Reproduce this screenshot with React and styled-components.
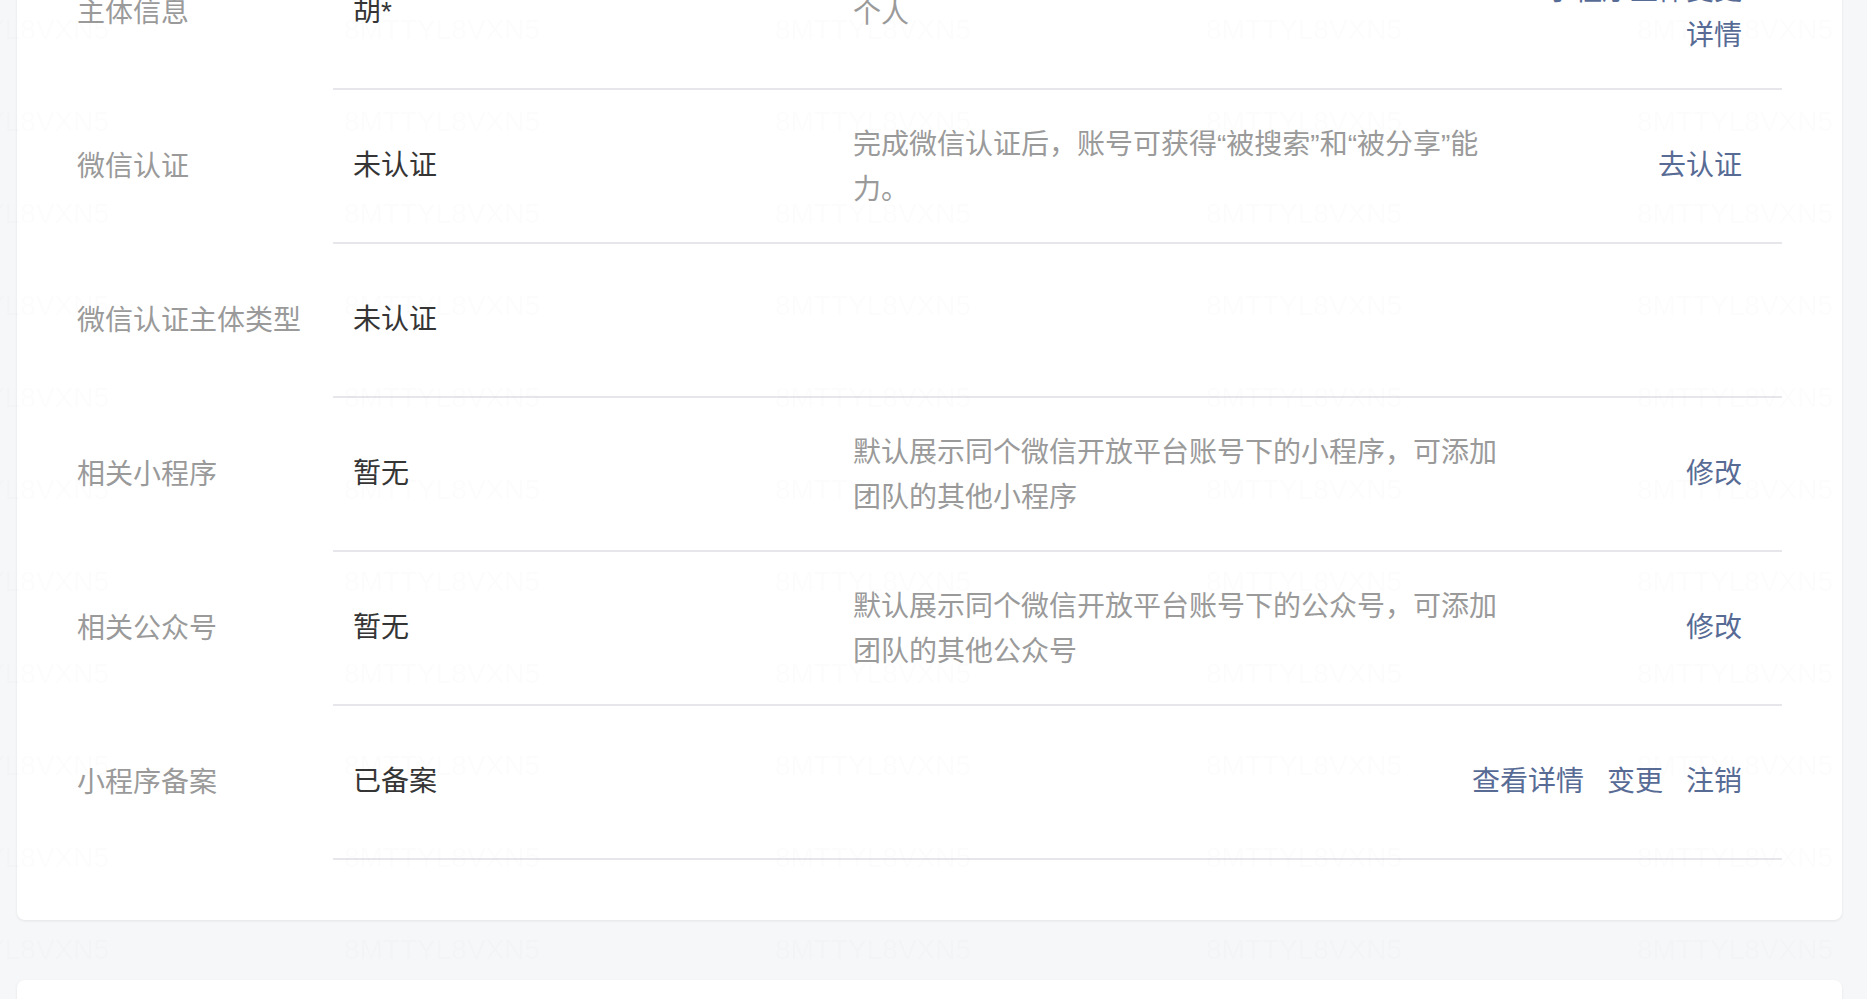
import React from "react";
import styled, { createGlobalStyle } from "styled-components";

const GlobalStyle = createGlobalStyle`
  html, body {
    margin: 0;
    padding: 0;
    overflow: hidden;
    background: #f6f7f9;
  }
  body {
    font-family: "Liberation Sans", "Noto Sans CJK SC", sans-serif;
    font-size: 28px;
    line-height: 1.6;
    color: #353535;
  }
`;

const Page = styled.div`
  margin-top: -64px;
  padding: 0 25px 0 17px;
  display: flex;
  flex-direction: column;
  gap: 60px;
`;

const Card = styled.section`
  background: #fff;
  border-radius: 8px;
  box-shadow: 0 1px 3px rgba(0, 0, 0, 0.08);
  padding: 0 60px ${(p) => (p.$tail ? "0" : "60px")};
  min-height: ${(p) => (p.$tail ? "200px" : "auto")};
`;

const Row = styled.div`
  display: grid;
  grid-template-columns: 256px 1fr;
  align-items: center;
`;

const Label = styled.div`
  color: #9a9a9a;
  white-space: nowrap;
`;

const Content = styled.div`
  display: flex;
  align-items: center;
  min-height: 152px;
  padding: 0 40px 0 20px;
  border-bottom: 2px solid #e7e7eb;
`;

const Value = styled.div`
  width: 500px;
  flex-shrink: 0;
  color: #353535;
`;

const Desc = styled.div`
  width: 650px;
  flex-shrink: 0;
  padding-top: 4px;
  color: #9a9a9a;
`;

const Actions = styled.div`
  flex: 1;
  min-width: 0;
  margin-left: ${(p) => (p.$hasDesc ? "20px" : "0")};
  padding-top: ${(p) => (p.$wrap ? "4px" : "0")};
  text-align: right;
`;

const Link = styled.a`
  color: #576b95;
  text-decoration: none;
  cursor: pointer;
  & + & {
    margin-left: 23px;
  }
`;

const Watermark = styled.div`
  position: fixed;
  top: -16px;
  left: -87px;
  right: 0;
  bottom: 0;
  pointer-events: none;
  display: grid;
  grid-template-columns: repeat(5, 431px);
  grid-auto-rows: 92px;
  align-items: center;
  font-family: "Liberation Sans", Arial, sans-serif;
  font-size: 28px;
  line-height: 1;
  color: rgba(0, 0, 0, 0.011);
  user-select: none;
`;

const Mark = styled.span`
  white-space: nowrap;
`;

const rows = [
  { label: "主体信息", value: "胡*", desc: "个人", actions: ["小程序主体变更详情"], wrap: true },
  {
    label: "微信认证",
    value: "未认证",
    desc: "完成微信认证后，账号可获得“被搜索”和“被分享”能力。",
    actions: ["去认证"],
  },
  { label: "微信认证主体类型", value: "未认证", desc: null, actions: [] },
  {
    label: "相关小程序",
    value: "暂无",
    desc: "默认展示同个微信开放平台账号下的小程序，可添加团队的其他小程序",
    actions: ["修改"],
  },
  {
    label: "相关公众号",
    value: "暂无",
    desc: "默认展示同个微信开放平台账号下的公众号，可添加团队的其他公众号",
    actions: ["修改"],
  },
  { label: "小程序备案", value: "已备案", desc: null, actions: ["查看详情", "变更", "注销"] },
];

export default function App() {
  const marks = Array.from({ length: 5 * 12 });
  return (
    <>
      <GlobalStyle />
      <Page>
        <Card>
          {rows.map((r) => (
            <Row key={r.label}>
              <Label>{r.label}</Label>
              <Content>
                <Value>{r.value}</Value>
                {r.desc && <Desc>{r.desc}</Desc>}
                <Actions $hasDesc={!!r.desc} $wrap={!!r.wrap}>
                  {r.actions.map((a) => (
                    <Link key={a}>{a}</Link>
                  ))}
                </Actions>
              </Content>
            </Row>
          ))}
        </Card>
        <Card $tail />
      </Page>
      <Watermark aria-hidden="true">
        {marks.map((_, i) => (
          <Mark key={i}>8MTTYL8VXN5</Mark>
        ))}
      </Watermark>
    </>
  );
}
